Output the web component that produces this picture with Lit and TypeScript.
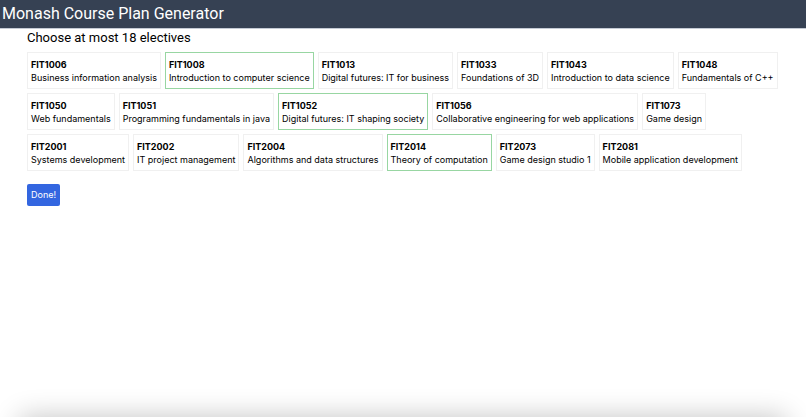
import { LitElement, html, css } from "lit";
import { customElement, state } from "lit/decorators.js";
import { classMap } from "lit/directives/class-map.js";

interface Unit {
  code: string;
  name: string;
}

const UNITS: Unit[] = [
  { code: "FIT1006", name: "Business information analysis" },
  { code: "FIT1008", name: "Introduction to computer science" },
  { code: "FIT1013", name: "Digital futures: IT for business" },
  { code: "FIT1033", name: "Foundations of 3D" },
  { code: "FIT1043", name: "Introduction to data science" },
  { code: "FIT1048", name: "Fundamentals of C++" },
  { code: "FIT1050", name: "Web fundamentals" },
  { code: "FIT1051", name: "Programming fundamentals in java" },
  { code: "FIT1052", name: "Digital futures: IT shaping society" },
  { code: "FIT1056", name: "Collaborative engineering for web applications" },
  { code: "FIT1073", name: "Game design" },
  { code: "FIT2001", name: "Systems development" },
  { code: "FIT2002", name: "IT project management" },
  { code: "FIT2004", name: "Algorithms and data structures" },
  { code: "FIT2014", name: "Theory of computation" },
  { code: "FIT2073", name: "Game design studio 1" },
  { code: "FIT2081", name: "Mobile application development" },
];

const LIMIT = 18;

@customElement("app-root")
export class AppRoot extends LitElement {
  static styles = css`
    :host {
      display: block;
      position: relative;
      box-sizing: border-box;
      min-height: 100vh;
      overflow: hidden;
      background: #fff;
      color: #000;
      font: 9px/13px Inter, "Liberation Sans", sans-serif;
    }
    .bar {
      background: #364153;
      color: #fff;
      padding: 2px;
      border-bottom: 1px solid #c4cad4;
    }
    .title,
    .heading {
      font-family: Roboto, "Liberation Sans", sans-serif;
      font-weight: 400;
    }
    .title {
      margin: 0;
      font-size: 16px;
      line-height: 24px;
    }
    .main {
      padding: 0 20px 0 27px;
    }
    .heading {
      margin: 0 0 5px;
      font-size: 13px;
      line-height: 18px;
    }
    .units {
      display: flex;
      flex-wrap: wrap;
      gap: 4px;
    }
    .unit {
      font: inherit;
      color: inherit;
      text-align: left;
      background: #fff;
      border: 1px solid #f0f0f0;
      padding: 5px 3px 4px;
      margin: 0;
      cursor: pointer;
    }
    .unit.selected {
      border-color: #98d6a2;
    }
    .code,
    .name {
      display: block;
    }
    .code {
      font-weight: 700;
    }
    .done {
      margin: 13px 0 0;
      padding: 4px;
      border: 0;
      border-radius: 2px;
      background: #3366e0;
      color: #fff;
      font: inherit;
      line-height: 14px;
      cursor: pointer;
    }
    .shade {
      position: absolute;
      top: 100%;
      left: 20px;
      right: 20px;
      height: 40px;
      box-shadow: 0 0 28px rgba(0, 0, 0, 0.24);
      pointer-events: none;
    }
  `;

  @state() private selected = new Set(["FIT1008", "FIT1052", "FIT2014"]);

  private toggle(code: string) {
    const next = new Set(this.selected);
    if (next.has(code)) next.delete(code);
    else if (next.size < LIMIT) next.add(code);
    this.selected = next;
  }

  render() {
    return html`
      <header class="bar"><h1 class="title">Monash Course Plan Generator</h1></header>
      <main class="main">
        <h2 class="heading">Choose at most ${LIMIT} electives</h2>
        <div class="units">
          ${UNITS.map((u) => {
            const on = this.selected.has(u.code);
            return html`<button
              type="button"
              class=${classMap({ unit: true, selected: on })}
              aria-pressed=${on ? "true" : "false"}
              @click=${() => this.toggle(u.code)}
            ><span class="code">${u.code}</span><span class="name">${u.name}</span></button>`;
          })}
        </div>
        <button type="button" class="done">Done!</button>
      </main>
      <div class="shade"></div>
    `;
  }
}
